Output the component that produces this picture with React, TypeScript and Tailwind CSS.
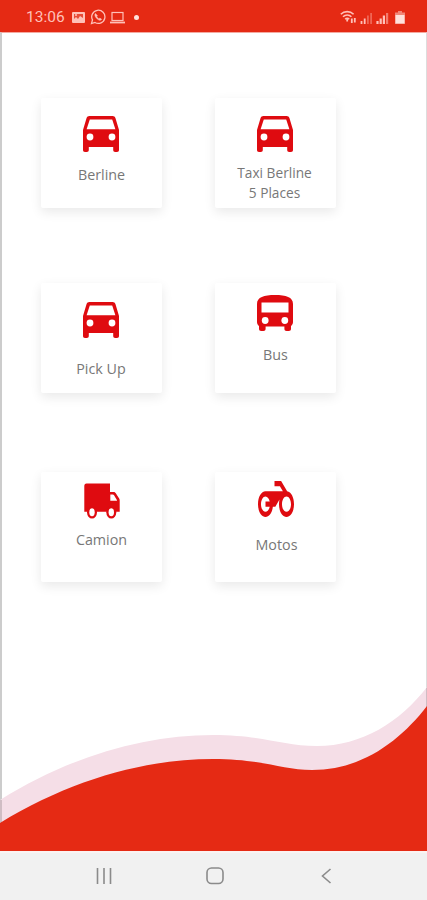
import { type ReactNode } from 'react';

// Vehicle category picker: status bar, six cards, wave footer, nav bar.

interface Category {
  label: ReactNode;
  icon: ReactNode;
  iconClass: string;
  labelClass: string;
}

function CarIcon() {
  return (
    <svg className="w-9 h-9" viewBox="0 0 36 36" fill="currentColor">
      <path
        fillRule="evenodd"
        d="M6.500 0h23c1.600 0 2.500.8 3 2.200L36 14v20c0 1.300-.7 2-2 2h-1.800c-1.300 0-2-.7-2-2v-3H5.800v3c0 1.300-.7 2-2 2H2c-1.300 0-2-.7-2-2V14L3.500 2.200C4 .8 4.900 0 6.500 0zM6.800 3.400L3.600 13.300h28.800L29.200 3.400z"
      />
      <circle cx="7" cy="21" r="3.400" fill="#fff" />
      <circle cx="29" cy="21" r="3.400" fill="#fff" />
    </svg>
  );
}

function BusIcon() {
  return (
    <svg className="w-9 h-9" viewBox="0 0 36 36" fill="currentColor">
      <path
        fillRule="evenodd"
        d="M0 9C0 2 7 0 18 0s18 2 18 9v18c0 1.800-.8 3-2 4v2.800c0 1.400-.8 2.200-2.200 2.200h-2.200c-1.400 0-2.200-.8-2.200-2.200V31.500H8.600v2.300c0 1.400-.8 2.200-2.200 2.200H4.200C2.800 36 2 35.200 2 33.800V31c-1.200-1-2-2.200-2-4zM4.500 7.500v10h27v-10z"
      />
      <circle cx="8.200" cy="25.500" r="3.400" fill="#fff" />
      <circle cx="27.800" cy="25.500" r="3.400" fill="#fff" />
    </svg>
  );
}

function TruckIcon() {
  return (
    <svg className="w-9 h-9" viewBox="0 0 36 36" fill="currentColor">
      <path d="M2.500 0.500H26V9h3.500c1 0 1.700.4 2.300 1.300l3.200 4.900c.5.8.7 1.400.7 2.300v11.300H.3V3C.3 1.500 1 .5 2.500 .5z" />
      <ellipse cx="8" cy="29.300" rx="5" ry="6.300" />
      <ellipse cx="27.300" cy="29.300" rx="5" ry="6.300" />
      <ellipse cx="8" cy="29.300" rx="2.700" ry="4" fill="#fff" />
      <ellipse cx="27.300" cy="29.300" rx="2.700" ry="4" fill="#fff" />
      <path d="M26.300 11.500h2.500c.5 0 .8.2 1.100.6l2.700 4.300c.3.5.4.900.4 1.400h-6.700z" fill="#fff" />
    </svg>
  );
}

function MotoIcon() {
  return (
    <svg className="w-9 h-9" viewBox="0 5 24 14" preserveAspectRatio="none" fill="currentColor">
      <path d="M19.44 9.03L15.41 5H11v2h3.59l2 2H5c-2.8 0-5 2.2-5 5s2.2 5 5 5c2.46 0 4.45-1.69 4.9-4h1.65l2.77-2.77c-.21.54-.32 1.14-.32 1.77 0 2.8 2.2 5 5 5s5-2.2 5-5c0-2.65-1.97-4.77-4.56-4.97zM7.82 15C7.4 16.15 6.28 17 5 17c-1.63 0-3-1.37-3-3s1.37-3 3-3c1.28 0 2.4.85 2.82 2H5v2h2.82zM19 17c-1.66 0-3-1.34-3-3s1.34-3 3-3 3 1.34 3 3-1.34 3-3 3z" />
    </svg>
  );
}

const categories: Category[] = [
  { label: 'Berline', icon: <CarIcon />, iconClass: 'pt-[18px] pr-px', labelClass: 'pt-[13px] text-[14.3px]' },
  {
    label: (
      <>
        Taxi Berline
        <br />5 Places
      </>
    ),
    icon: <CarIcon />,
    iconClass: 'pt-[18px] pr-px',
    labelClass: 'pt-[11px] pr-[2px] text-[13.7px]',
  },
  { label: 'Pick Up', icon: <CarIcon />, iconClass: 'pt-[19px] pr-px', labelClass: 'pt-[21px] pr-px text-[14.3px]' },
  { label: 'Bus', icon: <BusIcon />, iconClass: 'pt-[12px] pr-[2px]', labelClass: 'pt-[14px] text-[14.3px]' },
  { label: 'Camion', icon: <TruckIcon />, iconClass: 'pt-[11px] pl-px', labelClass: 'pt-[11px] text-[14.3px]' },
  { label: 'Motos', icon: <MotoIcon />, iconClass: 'pt-[9px] pl-px', labelClass: 'pt-[18px] pl-[2px] text-[14.3px]' },
];

function CategoryCard({ label, icon, iconClass, labelClass }: Category) {
  return (
    <button className="flex flex-col items-center w-[121px] h-[110px] bg-white rounded-xs shadow-[0_4px_12px_rgba(0,0,0,0.09)]">
      <span className={`text-[#df0b10] ${iconClass}`}>{icon}</span>
      <span className={`leading-5 text-[#777] whitespace-nowrap ${labelClass}`}>{label}</span>
    </button>
  );
}

function StatusBar() {
  return (
    <header className="flex items-center h-8 pl-[26px] pr-[22px] pt-[2px] bg-[#e52a14] text-[#ffc0b8]">
      <span className="w-[39px] text-[15.5px] leading-5 font-['Roboto',sans-serif]">13:06</span>
      <svg className="ml-[7px] w-[13px] h-[13px]" viewBox="0 0 13 13">
        <rect y="1" width="13" height="11" rx="1" fill="currentColor" />
        <path d="M2 8V3h9v4L8 5 6 8 4 6z" fill="#e84a38" />
        <circle cx="4" cy="4" r="1" fill="currentColor" />
      </svg>
      <svg className="ml-[5px] w-[16px] h-[16px]" viewBox="0 0 16 16" fill="none" stroke="currentColor" strokeWidth="1.3">
        <path d="M1.500 14.500l1-3.600A6.600 6.600 0 1 1 5 13.500z" />
        <path d="M5.500 4.500c-1.600 1.500.2 4 1.500 5.200 1.500 1.400 3.500 2.400 4.700.6l-1.900-1.200-.9.9-2.200-2.200.8-1z" fill="currentColor" strokeWidth=".5" />
      </svg>
      <svg className="ml-[4px] w-[15px] h-[13px]" viewBox="0 0 15 13" fill="none" stroke="currentColor" strokeWidth="1.200">
        <rect x="2" y="1.500" width="11" height="8" />
        <path d="M0 11.500h15" strokeWidth="1.800" />
      </svg>
      <span className="ml-[9px] w-[5px] h-[5px] rounded-full bg-[#ffe1dc]" />
      <div className="flex items-end ml-auto">
        <svg className="w-[17px] h-[14px]" viewBox="0 0 17 14" fill="none" stroke="currentColor" strokeWidth="1.600">
          <path d="M.8 4.200c3.500-3.500 9.300-3.500 12.800 0M3 6.800c2.300-2.400 6.100-2.400 8.400 0M5.200 9.200c1.100-1.200 2.900-1.200 4 0" />
          <path d="M7.200 9v2.500M11.800 13V8.500M14.800 8v4.500" strokeWidth="1.800" />
        </svg>
        <svg className="ml-[3px] w-[13px] h-[13px]" viewBox="0 0 13 13" strokeWidth="1.800" stroke="currentColor">
          <path d="M1.500 13v-3M4.700 13V7.500" />
          <path d="M7.900 13V4.500M11.100 13V2" opacity=".4" />
        </svg>
        <svg className="ml-[3px] w-[13px] h-[13px]" viewBox="0 0 13 13" strokeWidth="2.200" stroke="currentColor">
          <path d="M1.500 13v-3M4.700 13V7.500M7.900 13V4.500" />
          <path d="M11.100 13V2" opacity=".55" />
        </svg>
        <svg className="ml-[6px] w-[10px] h-[13px]" viewBox="0 0 10 13" fill="#ffe1dc">
          <path d="M3 0h4v1.500h3V13H0V1.500h3z" opacity=".5" />
          <path d="M.5 4h9v8.500h-9z" />
        </svg>
      </div>
    </header>
  );
}

function Wave() {
  return (
    <svg className="block w-[427px] h-[171px] -ml-[2px]" viewBox="0 680 427 171">
      <path d="M0 800C70 756 145 735 213 735C263 735 282 746 317 746C362 746 400 722 427 687V851H0z" fill="#f5dee7" />
      {/* screen edges, darkened where they cross the pale band */}
      <path d="M0 800h2v24H0zM426 688h1v20h-1z" fill="#000" opacity=".15" />
      <path d="M0 823C70 780 145 759 213 759C263 759 282 770 312 770C362 770 400 741 427 706V851H0z" fill="#e52a14" />
    </svg>
  );
}

function NavBar() {
  return (
    <nav className="flex items-center h-[49px] pb-[2px] border-t-2 border-[#fbf3f2] bg-[#f1f1f1] text-[#8b8b8b]">
      <svg className="ml-[96px] w-4 h-4" viewBox="0 0 16 16" fill="none" stroke="currentColor" strokeWidth="1.600">
        <path d="M1.500 0v16M8 0v16M14.500 0v16" />
      </svg>
      <svg className="ml-[94px] w-[18px] h-[18px]" viewBox="0 0 18 18" fill="none" stroke="currentColor" strokeWidth="1.600">
        <rect x="1" y="1" width="16" height="15.500" rx="4.500" />
      </svg>
      <svg className="ml-[97px] w-[11px] h-4" viewBox="0 0 11 16" fill="none" stroke="currentColor" strokeWidth="1.600">
        <path d="M9.500 1L1.500 8l8 7" />
      </svg>
    </nav>
  );
}

export default function App() {
  return (
    <div className="flex flex-col w-[427px] h-[900px] overflow-hidden bg-white font-['Open_Sans','Noto_Sans',sans-serif]">
      <StatusBar />
      <main className="flex flex-col h-[819px] border-t border-t-[#f4aaa1] border-l-2 border-l-[#ccc] border-r border-r-[#ddd]">
        <div className="grid grid-cols-[121px_121px] gap-x-[53px] pt-[65px] pl-[39px]">
          {categories.map((c, i) => (
            <div key={i} className={i < 2 ? 'h-[185px]' : 'h-[189px]'}>
              <CategoryCard {...c} />
            </div>
          ))}
        </div>
        <div className="mt-auto">
          <Wave />
        </div>
      </main>
      <NavBar />
    </div>
  );
}
